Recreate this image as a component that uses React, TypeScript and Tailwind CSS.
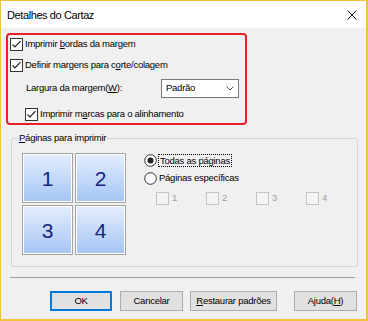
import React from "react";

function Check({ checked = true, disabled = false }: { checked?: boolean; disabled?: boolean }) {
  return (
    <svg width="13" height="13" viewBox="0 0 13 13" className="shrink-0">
      <rect x="0.5" y="0.5" width="12" height="12" fill={disabled ? "#f4f4f4" : "#ffffff"} stroke={disabled ? "#c4c4c4" : "#333333"} />
      {checked && <polyline points="2.5,6.5 5,9 10.5,3.2" fill="none" stroke="#222" strokeWidth="1.2" />}
    </svg>
  );
}

function Radio({ checked }: { checked: boolean }) {
  return (
    <svg width="13" height="13" viewBox="0 0 13 13" className="shrink-0">
      <circle cx="6.5" cy="6.5" r="5.8" fill="#fff" stroke="#333" />
      {checked && <circle cx="6.5" cy="6.5" r="3" fill="#222" />}
    </svg>
  );
}

function Tile({ n }: { n: string }) {
  return (
    <div className="w-[51px] h-[50px] border border-[#a3a3a3] p-0">
      <div className="w-full h-full border border-white bg-gradient-to-b from-[#e2edfc] to-[#a6c5f4] flex items-center justify-center pt-[2px]">
        <span className="text-[21px] text-[#16247c] font-['Liberation_Sans',Arial,sans-serif]">{n}</span>
      </div>
    </div>
  );
}

export default function App() {
  return (
    <div className="w-[368px] h-[321px] border-t border-l border-r-2 border-b-2 border-[#f2c23c] bg-[#f0f0f0] flex flex-col font-['Liberation_Sans',Arial,sans-serif] text-[9.5px] tracking-[-0.25px] text-black overflow-hidden">
      {/* Title bar */}
      <div className="h-[27px] bg-white flex items-center justify-between pl-[6px] pr-[8px] shrink-0">
        <span className="text-[11px] tracking-[-0.4px] mt-[1px]">Detalhes do Cartaz</span>
        <svg width="10" height="10" viewBox="0 0 10 10" className="mr-[1px]">
          <path d="M0.5 0.5 L9.5 9.5 M9.5 0.5 L0.5 9.5" stroke="#111" strokeWidth="1" />
        </svg>
      </div>

      {/* Red highlighted box */}
      <div className="mt-[5px] ml-[5px] w-[241px] h-[92px] border-2 border-[#e6212b] rounded-[4px] flex flex-col pl-[2px] pt-[3px] shrink-0">
        <div className="flex items-center h-[13px] gap-[2px]">
          <Check />
          <span>Imprimir <span className="underline">b</span>ordas da margem</span>
        </div>
        <div className="flex items-center h-[13px] gap-[2px] mt-[8px]">
          <Check />
          <span>Definir margens para c<span className="underline">o</span>rte/colagem</span>
        </div>
        <div className="flex items-center h-[19px] mt-[7px]">
          <span className="ml-[16px] w-[135px]">Largura da margem(<span className="underline">W</span>):</span>
          <div className="w-[78px] h-[19px] bg-white border border-[#7a7a7a] flex items-center justify-between pl-[4px] pr-[4px]">
            <span>Padrão</span>
            <svg width="8" height="5" viewBox="0 0 8 5">
              <polyline points="0.5,0.5 4,4 7.5,0.5" fill="none" stroke="#555" strokeWidth="1" />
            </svg>
          </div>
        </div>
        <div className="flex items-center h-[13px] gap-[2px] mt-[10px] ml-[15px]">
          <Check />
          <span>Imprimir m<span className="underline">a</span>rcas para o alinhamento</span>
        </div>
      </div>

      {/* Group box */}
      <div className="relative mt-[13px] ml-[10px] w-[347px] h-[129px] border border-[#d5d5d5] rounded-[2px] shrink-0 flex pl-[10px] pt-[14px]">
        <span className="absolute left-[6px] top-[-7px] bg-[#f0f0f0] px-[1px] leading-[12px]">
          <span className="underline">P</span>áginas para imprimir
        </span>
        <div className="grid grid-cols-[51px_51px] gap-x-[2px] gap-y-[2px] h-fit">
          <Tile n="1" />
          <Tile n="2" />
          <Tile n="3" />
          <Tile n="4" />
        </div>
        <div className="flex flex-col ml-[18px] pt-[1px]">
          <div className="flex items-center h-[13px] gap-[1px]">
            <Radio checked />
            <span className="border border-dotted border-black leading-[11px] px-[1px]">Todas as páginas</span>
          </div>
          <div className="flex items-center h-[13px] gap-[2px] mt-[5px]">
            <Radio checked={false} />
            <span>Páginas específicas</span>
          </div>
          <div className="flex items-center h-[12px] mt-[7px] ml-[12px] text-[#a0a0a0]">
            <div className="flex items-center gap-[3px] w-[50px]"><Check checked={false} disabled /><span>1</span></div>
            <div className="flex items-center gap-[3px] w-[50px]"><Check checked={false} disabled /><span>2</span></div>
            <div className="flex items-center gap-[3px] w-[50px]"><Check checked={false} disabled /><span>3</span></div>
            <div className="flex items-center gap-[3px] w-[50px]"><Check checked={false} disabled /><span>4</span></div>
          </div>
        </div>
      </div>

      {/* Separator */}
      <div className="mt-[10px] ml-[9px] w-[345px] h-[1px] bg-[#a0a0a0] shrink-0" />

      {/* Buttons */}
      <div className="flex mt-[13px] h-[20px] shrink-0">
        <button className="ml-[49px] w-[62px] h-[20px] border-2 border-[#0078d7] bg-[#e1e1e1] flex items-center justify-center">OK</button>
        <button className="ml-[8px] w-[63px] h-[20px] border border-[#adadad] bg-[#e1e1e1] flex items-center justify-center">Cancelar</button>
        <button className="ml-[7px] w-[87px] h-[20px] border border-[#adadad] bg-[#e1e1e1] flex items-center justify-center"><span><span className="underline">R</span>estaurar padrões</span></button>
        <button className="ml-[17px] w-[63px] h-[20px] border border-[#adadad] bg-[#e1e1e1] flex items-center justify-center"><span>Ajuda(<span className="underline">H</span>)</span></button>
      </div>
    </div>
  );
}
